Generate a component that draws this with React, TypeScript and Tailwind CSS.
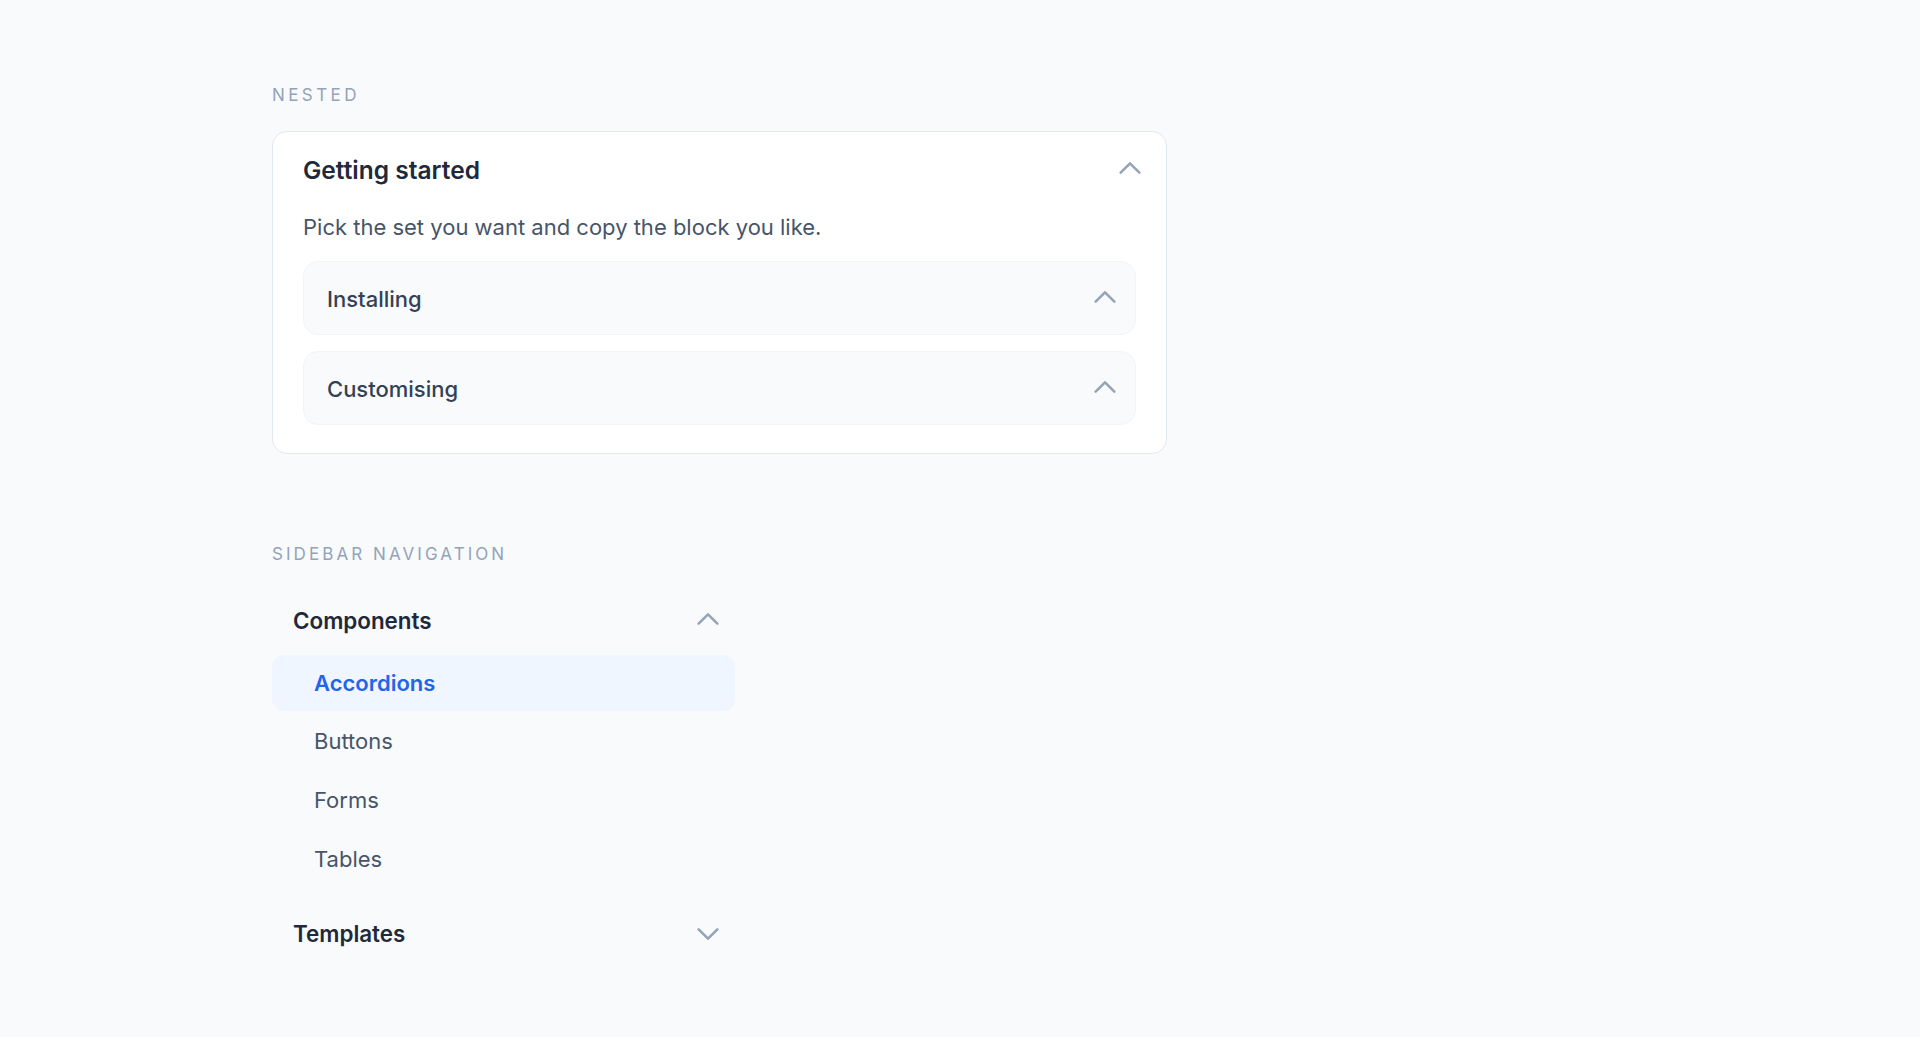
import React from 'react';

const ChevronUp: React.FC<{ className?: string }> = ({ className }) => (
  <svg viewBox="0 0 24 24" fill="none" stroke="currentColor" strokeWidth={2} strokeLinecap="round" strokeLinejoin="round" className={className}>
    <path d="m4.5 15.75 7.5-7.5 7.5 7.5" />
  </svg>
);

const ChevronDown: React.FC<{ className?: string }> = ({ className }) => (
  <svg viewBox="0 0 24 24" fill="none" stroke="currentColor" strokeWidth={2} strokeLinecap="round" strokeLinejoin="round" className={className}>
    <path d="m19.5 8.25-7.5 7.5-7.5-7.5" />
  </svg>
);

const subItems = ['Buttons', 'Forms', 'Tables'];

export default function App() {
  return (
    <div className="min-h-screen bg-[#f8fafc] font-['Inter',sans-serif] antialiased">
      <div className="pl-[272px] pt-[83px] pb-[80px]">
        {/* Nested accordion */}
        <section>
          <h2 className="text-[17px] leading-[24px] tracking-[0.2em] uppercase text-[#94a3b8] mb-[24px]">Nested</h2>
          <div className="w-[895px] bg-white border border-[#e2e8f0] rounded-[15px] px-[30px] pt-[23px] pb-[28px]">
            <div className="flex items-center justify-between h-[30px]">
              <h3 className="text-[24.5px] leading-[30px] font-semibold text-[#1e293b]">Getting started</h3>
              <ChevronUp className="w-[30px] h-[30px] text-[#94a3b8] -mr-[9px] -mt-[4px]" />
            </div>
            <p className="mt-[26px] text-[22px] leading-[33px] text-[#475569]">
              Pick the set you want and copy the block you like.
            </p>
            <div className="mt-[17px] flex flex-col gap-[16px]">
              {['Installing', 'Customising'].map((t) => (
                <div key={t} className="h-[74px] flex items-center justify-between bg-[#f8fafc] border border-[#f1f5f9] rounded-[15px] pl-[23px] pr-[15px]">
                  <span className="text-[22px] leading-[33px] font-medium text-[#334155] pt-[2px]">{t}</span>
                  <ChevronUp className="w-[30px] h-[30px] text-[#94a3b8] -mt-[2px]" />
                </div>
              ))}
            </div>
          </div>
        </section>

        {/* Sidebar navigation */}
        <section className="mt-[88px]">
          <h2 className="text-[17px] leading-[24px] tracking-[0.18em] uppercase text-[#94a3b8]">Sidebar navigation</h2>
          <nav className="w-[463px] mt-[40px]">
            <div className="flex items-center justify-between h-[30px] pl-[21px] pr-[12px]">
              <span className="text-[22.4px] leading-[30px] font-semibold text-[#1e293b]">Components</span>
              <ChevronUp className="w-[30px] h-[30px] text-[#94a3b8] -mt-[5px]" />
            </div>
            <ul className="mt-[19px] flex flex-col gap-[2.7px]">
              <li className="h-[56px] flex items-center pl-[42px] rounded-[12px] bg-[#eff6ff] text-[22px] font-semibold text-[#2563eb]">
                Accordions
              </li>
              {subItems.map((s) => (
                <li key={s} className="h-[56px] flex items-center pl-[42px] text-[22px] text-[#475569]">
                  {s}
                </li>
              ))}
            </ul>
            <div className="mt-[32px] flex items-center justify-between h-[30px] pl-[21px] pr-[12px]">
              <span className="text-[22.4px] leading-[30px] font-semibold text-[#1e293b]">Templates</span>
              <ChevronDown className="w-[30px] h-[30px] text-[#94a3b8]" />
            </div>
          </nav>
        </section>
      </div>
    </div>
  );
}
